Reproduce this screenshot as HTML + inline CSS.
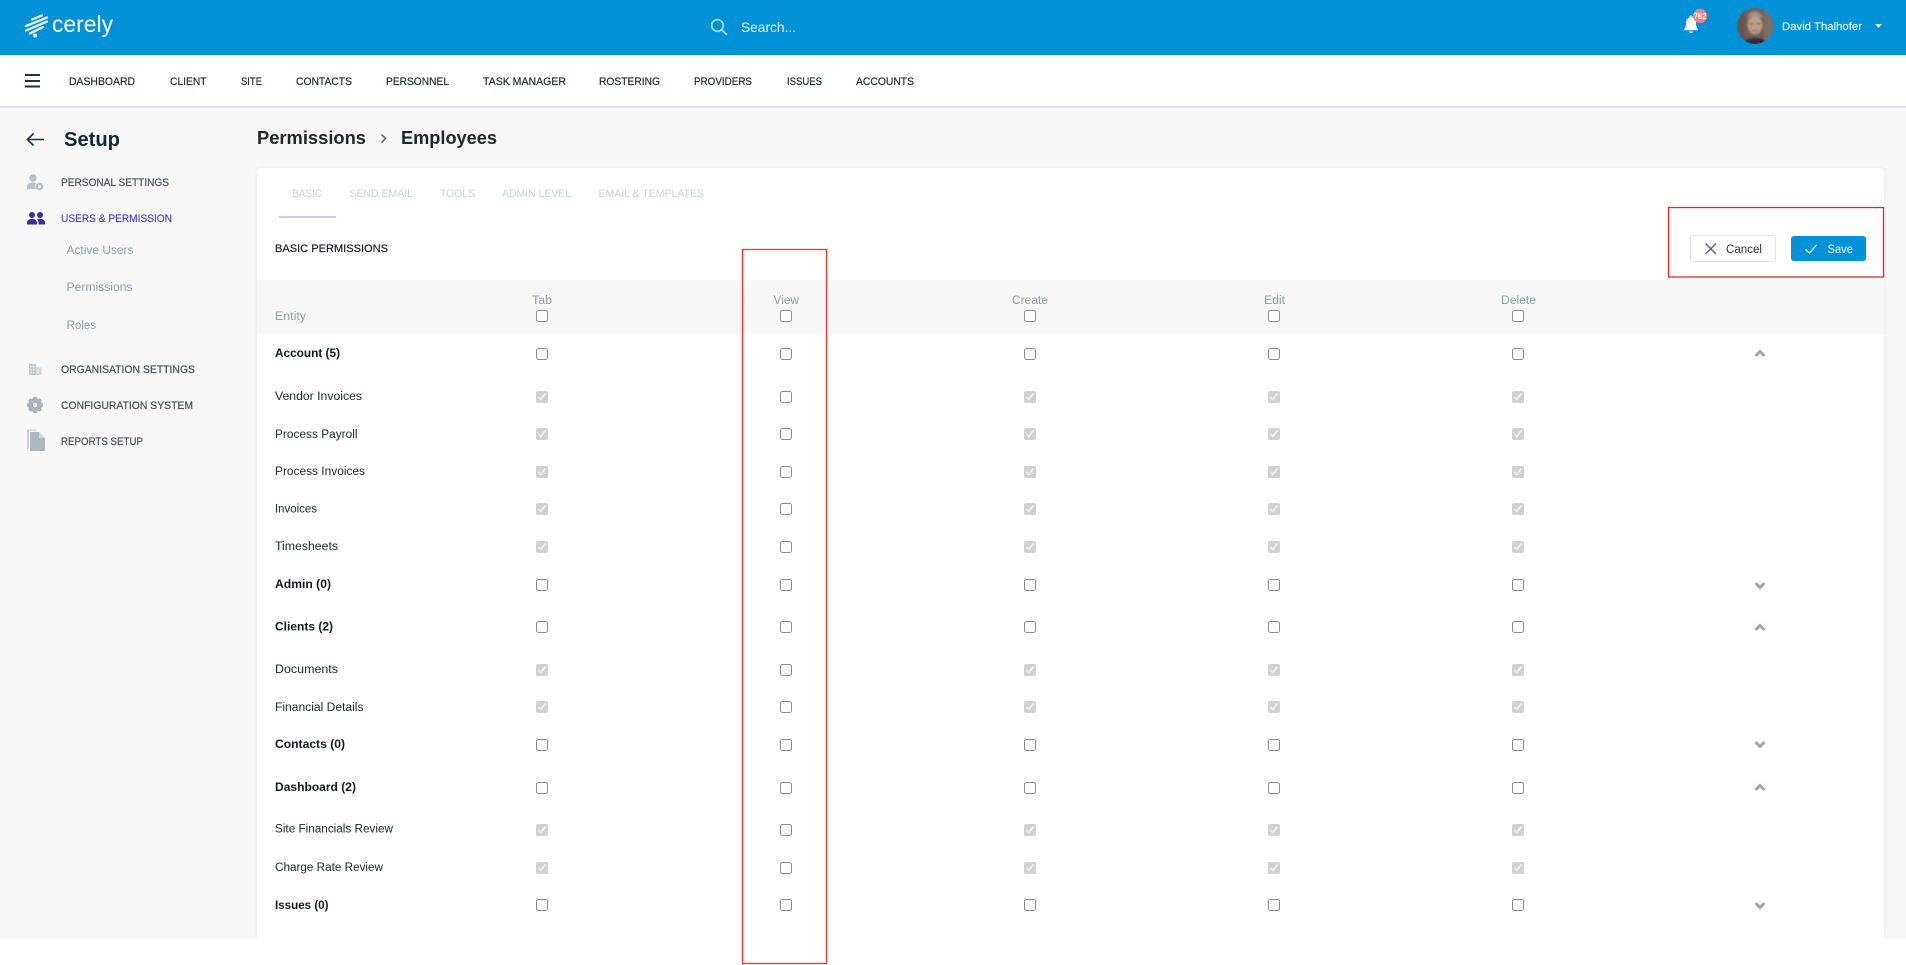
<!DOCTYPE html>
<html lang="en">
<head>
<meta charset="utf-8">
<title>Permissions - Employees</title>
<style>
html,body{margin:0;padding:0;width:1906px;height:965px;overflow:hidden;background:#fff;font-family:"Liberation Sans",sans-serif}
.abs{position:absolute}
#bg{left:0;top:107px;width:1906px;height:832px;background:#f8f8f9}
#top{left:0;top:0;width:1906px;height:55px;background:#0091d6}
#nav{left:0;top:55px;width:1906px;height:51px;background:#fff;border-bottom:2px solid #e2e0ee}
#card{left:257px;top:168px;width:1627px;height:771px;background:#fff;border-radius:4px 4px 0 0;box-shadow:0 0 4px rgba(0,0,0,.06)}
#foot{left:0;top:939px;width:1906px;height:26px;background:#fff}
#band{left:257px;top:280px;width:1627px;height:54px;background:#f8f8f8}
#cancel{left:1690px;top:235px;width:84px;height:25px;border:1px solid #e6e6ea;border-radius:3px;background:#fff}
#save{left:1791px;top:236px;width:75px;height:25px;border-radius:3px;background:#0091d6}
.r{position:absolute;left:0;height:12px;width:1906px}
.r input{position:absolute;margin:0;width:12px;height:12px;top:0}
.r input:not([disabled]){opacity:.82}
.r input:nth-child(1){left:536px}
.r input:nth-child(2){left:780px}
.r input:nth-child(3){left:1024px}
.r input:nth-child(4){left:1268px}
.r input:nth-child(5){left:1512px}
svg#o{position:absolute;left:0;top:0}
svg text{font-family:"Liberation Sans",sans-serif}
.n{font-size:11px;fill:#1c2a33;stroke:#1c2a33;stroke-width:.2}
.s{font-size:11px;fill:#474d55;stroke:#474d55;stroke-width:.2}
.u{font-size:11.5px;fill:#8c9cab}
.t{font-size:11px;fill:#cdd2d8}
.h{font-size:11.5px;fill:#8d9aa8}
.l{font-size:11.5px;fill:#22282e}
.b{font-size:11.5px;font-weight:bold;fill:#14191e}
</style>
</head>
<body>
<div class="abs" id="bg"></div>
<div class="abs" id="top"></div>
<div class="abs" id="nav"></div>
<div class="abs" id="card"></div>
<div class="abs" id="foot"></div>
<div class="abs" id="band"></div>
<div class="abs" id="cancel"></div>
<div class="abs" id="save"></div>

<div class="r" style="top:310px"><input type="checkbox"><input type="checkbox"><input type="checkbox"><input type="checkbox"><input type="checkbox"></div>
<div class="r" style="top:348px"><input type="checkbox"><input type="checkbox"><input type="checkbox"><input type="checkbox"><input type="checkbox"></div>
<div class="r" style="top:391px"><input type="checkbox" checked disabled><input type="checkbox"><input type="checkbox" checked disabled><input type="checkbox" checked disabled><input type="checkbox" checked disabled></div>
<div class="r" style="top:428px"><input type="checkbox" checked disabled><input type="checkbox"><input type="checkbox" checked disabled><input type="checkbox" checked disabled><input type="checkbox" checked disabled></div>
<div class="r" style="top:466px"><input type="checkbox" checked disabled><input type="checkbox"><input type="checkbox" checked disabled><input type="checkbox" checked disabled><input type="checkbox" checked disabled></div>
<div class="r" style="top:503px"><input type="checkbox" checked disabled><input type="checkbox"><input type="checkbox" checked disabled><input type="checkbox" checked disabled><input type="checkbox" checked disabled></div>
<div class="r" style="top:541px"><input type="checkbox" checked disabled><input type="checkbox"><input type="checkbox" checked disabled><input type="checkbox" checked disabled><input type="checkbox" checked disabled></div>
<div class="r" style="top:579px"><input type="checkbox"><input type="checkbox"><input type="checkbox"><input type="checkbox"><input type="checkbox"></div>
<div class="r" style="top:621px"><input type="checkbox"><input type="checkbox"><input type="checkbox"><input type="checkbox"><input type="checkbox"></div>
<div class="r" style="top:664px"><input type="checkbox" checked disabled><input type="checkbox"><input type="checkbox" checked disabled><input type="checkbox" checked disabled><input type="checkbox" checked disabled></div>
<div class="r" style="top:701px"><input type="checkbox" checked disabled><input type="checkbox"><input type="checkbox" checked disabled><input type="checkbox" checked disabled><input type="checkbox" checked disabled></div>
<div class="r" style="top:739px"><input type="checkbox"><input type="checkbox"><input type="checkbox"><input type="checkbox"><input type="checkbox"></div>
<div class="r" style="top:782px"><input type="checkbox"><input type="checkbox"><input type="checkbox"><input type="checkbox"><input type="checkbox"></div>
<div class="r" style="top:824px"><input type="checkbox" checked disabled><input type="checkbox"><input type="checkbox" checked disabled><input type="checkbox" checked disabled><input type="checkbox" checked disabled></div>
<div class="r" style="top:862px"><input type="checkbox" checked disabled><input type="checkbox"><input type="checkbox" checked disabled><input type="checkbox" checked disabled><input type="checkbox" checked disabled></div>
<div class="r" style="top:899px"><input type="checkbox"><input type="checkbox"><input type="checkbox"><input type="checkbox"><input type="checkbox"></div>

<svg id="o" width="1906" height="965" viewBox="0 0 1906 965" xmlns="http://www.w3.org/2000/svg">
<defs>
<clipPath id="av"><circle cx="1755" cy="26" r="18"/></clipPath>
<filter id="soft" x="-10%" y="-10%" width="120%" height="120%"><feGaussianBlur stdDeviation="1.100"/></filter>
</defs>

<!-- logo -->
<g stroke="#fff" stroke-width="2.200" stroke-linecap="round" fill="none">
<path d="M32 19.500 L42 15.500"/>
<path d="M26 26 L47 17.500"/>
<path d="M26 30.500 L47 21.500"/>
<path d="M30 33.500 L43 27"/>
</g>
<circle cx="35" cy="35.500" r="2" fill="#fff"/>
<text x="52" y="32" font-size="23.500" fill="#fff" textLength="61" lengthAdjust="spacingAndGlyphs">cerely</text>

<!-- search -->
<g stroke="#a8dcef" stroke-width="1.700" fill="none" stroke-linecap="round"><circle cx="717.500" cy="25.500" r="5.800"/><path d="M722 30 L726.500 34.500"/></g>
<text x="741" y="32" font-size="14" fill="#e6f5fc" textLength="55" lengthAdjust="spacingAndGlyphs">Search...</text>

<!-- bell -->
<path d="M1691 15.500c-.8 0-1.400.6-1.400 1.400v.5c-2.400.8-3.600 3-3.600 5.600 0 3-.6 4.600-2 6.200v1h14v-1c-1.400-1.600-2-3.200-2-6.200 0-2.600-1.200-4.800-3.600-5.600v-.5c0-.8-.6-1.400-1.400-1.400z" fill="#fff"/>
<path d="M1689 31.500h4c0 1-.9 1.400-2 1.400s-2-.4-2-1.400z" fill="#fff"/>
<circle cx="1700" cy="16" r="7" fill="#ff7f85"/>
<text x="1700" y="19" font-size="8.500" font-weight="bold" fill="#fff" text-anchor="middle" textLength="12.500" lengthAdjust="spacingAndGlyphs">762</text>

<!-- avatar -->
<g clip-path="url(#av)">
<rect x="1737" y="8" width="36" height="36" fill="#6f5f55"/>
<g filter="url(#soft)">
<rect x="1735" y="6" width="10" height="40" fill="#6a544a"/>
<rect x="1764" y="6" width="11" height="40" fill="#7b6d66"/>
<ellipse cx="1755" cy="25" rx="7.500" ry="9.500" fill="#c09c86"/>
<path d="M1747 19c1-5 4-7.500 8-7.500s7 2.500 8 7.500c-2-2.500-5-3.500-8-3.500s-6 1-8 3.500z" fill="#a09690"/>
<path d="M1742 46c1-6 6-8 13-8s12 2 13 8z" fill="#2e2c3a"/>
<rect x="1750" y="23" width="3.200" height="1.400" fill="#6a4c40"/>
<rect x="1757" y="23" width="3.200" height="1.400" fill="#6a4c40"/>
<rect x="1752" y="30" width="6" height="1.100" fill="#855a48"/>
</g>
</g>
<text x="1782" y="30" font-size="11" fill="#e8f6fc" stroke="#e8f6fc" stroke-width=".15" textLength="80" lengthAdjust="spacingAndGlyphs">David Thalhofer</text>
<path d="M1875 24 h7 l-3.500 4z" fill="#e8f6fc"/>

<!-- nav -->
<g stroke="#1f3542" stroke-width="2" fill="none"><path d="M25 75 H40"/><path d="M25 81 H40"/><path d="M25 86.500 H40"/></g>
<text class="n" x="69" y="85" textLength="66" lengthAdjust="spacingAndGlyphs">DASHBOARD</text>
<text class="n" x="170" y="85" textLength="36.500" lengthAdjust="spacingAndGlyphs">CLIENT</text>
<text class="n" x="241" y="85" textLength="21" lengthAdjust="spacingAndGlyphs">SITE</text>
<text class="n" x="296" y="85" textLength="56" lengthAdjust="spacingAndGlyphs">CONTACTS</text>
<text class="n" x="386" y="85" textLength="63" lengthAdjust="spacingAndGlyphs">PERSONNEL</text>
<text class="n" x="483" y="85" textLength="83" lengthAdjust="spacingAndGlyphs">TASK MANAGER</text>
<text class="n" x="599" y="85" textLength="61" lengthAdjust="spacingAndGlyphs">ROSTERING</text>
<text class="n" x="694" y="85" textLength="58" lengthAdjust="spacingAndGlyphs">PROVIDERS</text>
<text class="n" x="787" y="85" textLength="35" lengthAdjust="spacingAndGlyphs">ISSUES</text>
<text class="n" x="856" y="85" textLength="58" lengthAdjust="spacingAndGlyphs">ACCOUNTS</text>

<!-- sidebar head -->
<g stroke="#16303f" stroke-width="1.600" fill="none"><path d="M27.500 139.500 H44"/><path d="M33.500 133.500 L27.500 139.500 L33.500 145.500"/></g>
<text x="64" y="146" font-size="20" font-weight="bold" fill="#0f2a3a" textLength="56" lengthAdjust="spacingAndGlyphs">Setup</text>

<!-- breadcrumbs -->
<text x="257" y="144" font-size="18" font-weight="bold" fill="#20262c" textLength="109" lengthAdjust="spacingAndGlyphs">Permissions</text>
<path d="M381.500 134.500 L385.500 138.500 L381.500 142.500" stroke="#5a5a80" stroke-width="1.500" fill="none"/>
<text x="401" y="144" font-size="18" font-weight="bold" fill="#20262c" textLength="96" lengthAdjust="spacingAndGlyphs">Employees</text>

<!-- sidebar icons -->
<g fill="#b8c1c8">
<circle cx="33" cy="178" r="3.800"/>
<path d="M27 189v-2.500c0-2.600 3-4 6-4 1.200 0 2 .1 3 .5-.9 1.600-1 3.800-.2 6z"/>
<circle cx="39.500" cy="186.500" r="2.700" fill="none" stroke="#b8c1c8" stroke-width="2.400"/>
</g>
<g fill="#3d2ea0">
<circle cx="32" cy="215" r="3"/><circle cx="40" cy="215" r="3"/>
<path d="M27 224.500v-2c0-2.400 2.600-3.800 5-3.800s5 1.400 5 3.800v2z"/>
<path d="M38.500 224.500v-2c0-1.400-.5-2.500-1.400-3.300 1-.4 2-.5 3-.5 2.400 0 5 1.400 5 3.800v2z"/>
</g>
<g fill="#c3cbd1">
<rect x="29" y="364" width="7" height="11"/>
<rect x="36" y="367.500" width="5.500" height="7.500" fill="#d3d9dd"/>
<g fill="#f8f8f9"><rect x="30.500" y="366" width="1.200" height="1.200"/><rect x="33" y="366" width="1.200" height="1.200"/><rect x="30.500" y="369" width="1.200" height="1.200"/><rect x="33" y="369" width="1.200" height="1.200"/><rect x="30.500" y="372" width="1.200" height="1.200"/><rect x="33" y="372" width="1.200" height="1.200"/><rect x="37.500" y="369.500" width="1.200" height="1.200"/><rect x="37.500" y="372" width="1.200" height="1.200"/></g>
</g>
<g>
<circle cx="35" cy="405" r="4.500" fill="none" stroke="#aab4bc" stroke-width="5"/>
<g stroke="#aab4bc" stroke-width="3.400"><path d="M35 397V399"/><path d="M35 411V413"/><path d="M27 405H29"/><path d="M41 405H43"/><path d="M29.300 399.300L30.800 400.800"/><path d="M39.200 409.200L40.700 410.700"/><path d="M40.700 399.300L39.200 400.800"/><path d="M30.800 409.200L29.300 410.700"/></g>
</g>
<g>
<path d="M27 429.500h9l1 1h-8v18h-2z" fill="#c6ced4"/>
<path d="M30 432h9l6 6v13H30z" fill="#aeb8c0"/>
<path d="M39 432v6h6z" fill="#d2d9de"/>
</g>

<!-- sidebar text -->
<text class="s" x="61" y="186" textLength="108" lengthAdjust="spacingAndGlyphs">PERSONAL SETTINGS</text>
<text x="61" y="222" font-size="11" fill="#4a3fb5" stroke="#4a3fb5" stroke-width=".15" textLength="111" lengthAdjust="spacingAndGlyphs">USERS &amp; PERMISSION</text>
<text class="u" x="66.500" y="254" textLength="67" lengthAdjust="spacingAndGlyphs">Active Users</text>
<text class="u" x="66.500" y="291" textLength="66" lengthAdjust="spacingAndGlyphs">Permissions</text>
<text class="u" x="66.500" y="329" textLength="29.500" lengthAdjust="spacingAndGlyphs">Roles</text>
<text class="s" x="61" y="373" textLength="134" lengthAdjust="spacingAndGlyphs">ORGANISATION SETTINGS</text>
<text class="s" x="61" y="409" textLength="132" lengthAdjust="spacingAndGlyphs">CONFIGURATION SYSTEM</text>
<text class="s" x="61" y="445" textLength="82" lengthAdjust="spacingAndGlyphs">REPORTS SETUP</text>

<!-- tabs -->
<text x="292" y="197" font-size="11" fill="#cfcbe8" textLength="30" lengthAdjust="spacingAndGlyphs">BASIC</text>
<text class="t" x="349.500" y="197" textLength="63.500" lengthAdjust="spacingAndGlyphs">SEND EMAIL</text>
<text class="t" x="440" y="197" textLength="35" lengthAdjust="spacingAndGlyphs">TOOLS</text>
<text class="t" x="502" y="197" textLength="69" lengthAdjust="spacingAndGlyphs">ADMIN LEVEL</text>
<text class="t" x="598.500" y="197" textLength="105.500" lengthAdjust="spacingAndGlyphs">EMAIL &amp; TEMPLATES</text>
<rect x="279" y="216" width="57" height="2" fill="#d2cdea"/>

<text x="275" y="252" font-size="11" fill="#1a1f25" stroke="#1a1f25" stroke-width=".2" textLength="113" lengthAdjust="spacingAndGlyphs">BASIC PERMISSIONS</text>

<!-- buttons -->
<g stroke="#5d5d8c" stroke-width="1.500" fill="none"><path d="M1705.500 243.500 L1716 254"/><path d="M1716 243.500 L1705.500 254"/></g>
<text x="1726" y="253" font-size="11.500" fill="#2c2f4a" textLength="36" lengthAdjust="spacingAndGlyphs">Cancel</text>
<path d="M1805.500 249.500 L1809.500 253 L1816.500 245" stroke="#fff" stroke-width="1.200" fill="none"/>
<text x="1827.500" y="253" font-size="11.500" fill="#fff" textLength="25.500" lengthAdjust="spacingAndGlyphs">Save</text>

<!-- table header -->
<text class="h" x="275" y="320" textLength="31" lengthAdjust="spacingAndGlyphs">Entity</text>
<text class="h" x="532" y="304" textLength="20" lengthAdjust="spacingAndGlyphs">Tab</text>
<text class="h" x="773.500" y="304" textLength="25.500" lengthAdjust="spacingAndGlyphs">View</text>
<text class="h" x="1012" y="304" textLength="36" lengthAdjust="spacingAndGlyphs">Create</text>
<text class="h" x="1264" y="304" textLength="21" lengthAdjust="spacingAndGlyphs">Edit</text>
<text class="h" x="1501" y="304" textLength="35" lengthAdjust="spacingAndGlyphs">Delete</text>

<!-- rows -->
<text class="b" x="275" y="357" textLength="65" lengthAdjust="spacingAndGlyphs">Account (5)</text>
<text class="l" x="275" y="400" textLength="87" lengthAdjust="spacingAndGlyphs">Vendor Invoices</text>
<text class="l" x="275" y="438" textLength="82.500" lengthAdjust="spacingAndGlyphs">Process Payroll</text>
<text class="l" x="275" y="475" textLength="90" lengthAdjust="spacingAndGlyphs">Process Invoices</text>
<text class="l" x="275" y="512.500" textLength="42" lengthAdjust="spacingAndGlyphs">Invoices</text>
<text class="l" x="275" y="550" textLength="63" lengthAdjust="spacingAndGlyphs">Timesheets</text>
<text class="b" x="275" y="588" textLength="56" lengthAdjust="spacingAndGlyphs">Admin (0)</text>
<text class="b" x="275" y="630.500" textLength="58" lengthAdjust="spacingAndGlyphs">Clients (2)</text>
<text class="l" x="275" y="673" textLength="63" lengthAdjust="spacingAndGlyphs">Documents</text>
<text class="l" x="275" y="711" textLength="88.500" lengthAdjust="spacingAndGlyphs">Financial Details</text>
<text class="b" x="275" y="748" textLength="70" lengthAdjust="spacingAndGlyphs">Contacts (0)</text>
<text class="b" x="275" y="791" textLength="81" lengthAdjust="spacingAndGlyphs">Dashboard (2)</text>
<text class="l" x="275" y="832.500" textLength="118" lengthAdjust="spacingAndGlyphs">Site Financials Review</text>
<text class="l" x="275" y="871" textLength="108" lengthAdjust="spacingAndGlyphs">Charge Rate Review</text>
<text class="b" x="275" y="909" textLength="53.500" lengthAdjust="spacingAndGlyphs">Issues (0)</text>

<!-- chevrons -->
<g stroke="#a6a6a6" stroke-width="3" fill="none">
<path d="M1755.500 356 L1760 351.500 L1764.500 356"/>
<path d="M1755.500 583 L1760 587.500 L1764.500 583"/>
<path d="M1755.500 630 L1760 625.500 L1764.500 630"/>
<path d="M1755.500 742 L1760 746.500 L1764.500 742"/>
<path d="M1755.500 790 L1760 785.500 L1764.500 790"/>
<path d="M1755.500 903 L1760 907.500 L1764.500 903"/>
</g>

<!-- red annotations -->
<rect x="742.500" y="249.500" width="84" height="714" fill="none" stroke="#e8343a" stroke-width="1.300"/>
<rect x="1668.500" y="207.500" width="215" height="69.500" fill="none" stroke="#e8242a" stroke-width="1.300"/>
</svg>
</body>
</html>
